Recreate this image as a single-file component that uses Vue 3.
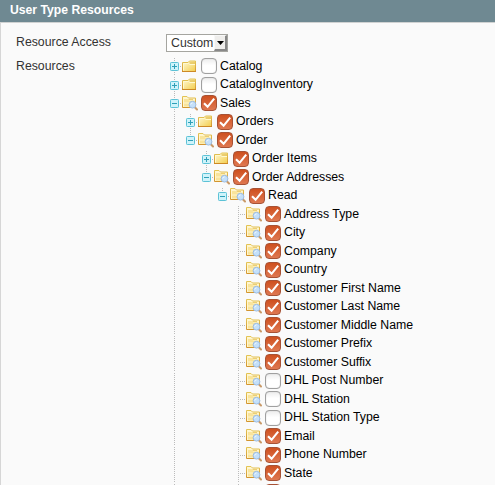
<script setup>
import { ref } from 'vue'

const names = [
  ['Catalog', 0, 'plus', false],
  ['CatalogInventory', 0, 'plus', false],
  ['Sales', 0, 'minus', true],
  ['Orders', 1, 'plus', true],
  ['Order', 1, 'minus', true],
  ['Order Items', 2, 'plus', true],
  ['Order Addresses', 2, 'minus', true],
  ['Read', 3, 'minus', true],
  ['Address Type', 4, 'leaf', true],
  ['City', 4, 'leaf', true],
  ['Company', 4, 'leaf', true],
  ['Country', 4, 'leaf', true],
  ['Customer First Name', 4, 'leaf', true],
  ['Customer Last Name', 4, 'leaf', true],
  ['Customer Middle Name', 4, 'leaf', true],
  ['Customer Prefix', 4, 'leaf', true],
  ['Customer Suffix', 4, 'leaf', true],
  ['DHL Post Number', 4, 'leaf', false],
  ['DHL Station', 4, 'leaf', false],
  ['DHL Station Type', 4, 'leaf', false],
  ['Email', 4, 'leaf', true],
  ['Phone Number', 4, 'leaf', true],
  ['State', 4, 'leaf', true],
  ['', 4, 'leaf', true],
]
const nodes = ref(names.map(([label, depth, kind, checked]) => ({ label, depth, kind, checked })))

const hasLine = (index, level) => {
  if (level === 0 || index === names.length - 1) return level === 0 || level === 4
  for (let i = index + 1; i < names.length; i++) {
    if (names[i][1] < level) return false
    if (names[i][1] === level) return true
  }
  return false
}
</script>

<template>
  <section class="panel">
    <svg class="defs" width="0" height="0">
      <defs>
        <linearGradient id="gold" x1="0" y1="0" x2="1" y2="1">
          <stop offset="0" stop-color="#fffbd9" />
          <stop offset="1" stop-color="#f3cd4c" />
        </linearGradient>
        <linearGradient id="edge" x1="0" y1="0" x2="0" y2="1">
          <stop offset="0" stop-color="#e3c455" />
          <stop offset="1" stop-color="#d3952f" />
        </linearGradient>
      </defs>
    </svg>
    <h1 class="head">User Type Resources</h1>
    <div class="body">
      <div class="field">
        <span class="label">Resource Access</span>
        <div class="select">
          <span class="value">Custom</span>
          <span class="arrow"><svg width="7" height="4" viewBox="0 0 7 4"><path d="M0 0h7L3.5 4z" /></svg></span>
        </div>
      </div>
      <div class="field">
        <span class="label second">Resources</span>
        <ul class="tree">
          <li v-for="(n, i) in nodes" :key="i" class="row">
            <span v-for="l in n.depth" :key="l" class="guide" :class="{ line: hasLine(i, l - 1) }"></span>
            <span class="guide elbow" :class="[n.kind, { line: hasLine(i, n.depth), end: !hasLine(i, n.depth) }]">
              <svg v-if="n.kind !== 'leaf'" class="toggle" width="9" height="9" viewBox="0 0 9 9">
                <rect x=".5" y=".5" width="8" height="8" rx=".8" fill="#cff3fa" stroke="#5cc2d6" />
                <path d="M2 4.5h5" stroke="#2f9fb8" />
                <path v-if="n.kind === 'plus'" d="M4.5 2v5" stroke="#2f9fb8" />
              </svg>
            </span>
            <svg class="folder" width="16" height="16" viewBox="0 0 16 16">
              <template v-if="n.kind === 'plus'">
                <path d="M.5 13.500v-9H6l1.500-1.500h6v10.500z" fill="url(#gold)" stroke="url(#edge)" />
                <path d="M7.500 5h5.500" stroke="#dcb544" />
                <path d="M1.500 12.500V5.500h5l1.500 1h5" fill="none" stroke="#fff9cf" />
                <path d="M0 13.500h14" stroke="#cd8925" />
              </template>
              <template v-else>
                <path d="M.5 12.500v-11H5l1.500 1.500h7v9.500z" fill="#fff6cf" stroke="url(#edge)" />
                <path d="M2 4h3.500L7 5.500h5.500V7.500H2zM2 8.500h10V11.500H2z" fill="#f9e49b" />
                <path d="M6.500 4.500H11" stroke="#eccf74" />
                <path d="M12.800 12.300l2.200 2.200" stroke="#c99a68" stroke-width="2" stroke-linecap="round" />
                <circle cx="10.500" cy="9.700" r="3.400" fill="#c4e0fa" stroke="#9dbce0" />
                <path d="M8.700 9.500q.3-1.500 1.800-1.600" fill="none" stroke="#f4fbff" />
              </template>
            </svg>
            <span class="check" :class="{ on: n.checked }" @click="n.checked = !n.checked">
              <svg v-if="n.checked" width="14" height="14" viewBox="0 0 14 14">
                <path d="M2 7.200l3.600 3.600L12.200 2.600" fill="none" stroke="#fff" stroke-width="2.100" />
              </svg>
            </span>
            <span class="name">{{ n.label }}</span>
          </li>
        </ul>
      </div>
    </div>
  </section>
</template>

<style>
body { margin: 0; overflow: hidden; background: #fafafa; }
</style>

<style scoped>
.panel {
  box-sizing: border-box;
  height: 485px;
  overflow: hidden;
  font: 12.300px "Liberation Sans", Arial, sans-serif;
  color: #333;
}
.defs { display: block; }
.head {
  box-sizing: border-box;
  height: 22px;
  margin: 0;
  padding-left: 10px;
  background: #6f8992;
  color: #fff;
  font-size: 12.200px;
  line-height: 21px;
  font-weight: bold;
}
.body {
  box-sizing: border-box;
  height: 463px;
  padding: 11px 0 0 15px;
  border-top: 1px solid #d0d2d2;
  border-left: 1px solid #d6d6d6;
  background: #fafafa;
}
.field { display: flex; align-items: flex-start; }
.label { width: 150px; line-height: 16px; }
.second { padding-top: 1px; }
.select {
  box-sizing: border-box;
  display: flex;
  width: 62px;
  height: 18px;
  margin-bottom: 5px;
  border: 1px solid #a5a5a0;
  background: #fff;
}
.value { width: 47px; padding-left: 4px; box-sizing: border-box; line-height: 17px; }
.arrow {
  display: flex;
  box-sizing: border-box;
  width: 13px;
  height: 16px;
  align-items: center;
  justify-content: center;
  background: #efeeec;
  border: solid;
  border-width: 1px 2px 2px 1px;
  border-color: #f8f8f8 #888 #888 #f8f8f8;
}
.arrow svg { flex: none; }
.tree { margin: 0; padding: 0; list-style: none; color: #000; }
.row { display: flex; height: 18px; align-items: flex-start; white-space: nowrap; }
.row:nth-child(odd) { height: 19px; }
.guide { flex: none; width: 16px; height: 100%; }
.guide.line, .guide.end {
  background: repeating-linear-gradient(to bottom, transparent 0 1px, #bbb 1px 2px) 8px 0 / 1px 100% no-repeat;
}
.guide.end { background-size: 1px 9px; }
.elbow::after {
  content: "";
  display: block;
  width: 7px;
  height: 1px;
  margin: 9px 0 0 9px;
  background: repeating-linear-gradient(to right, transparent 0 1px, #bbb 1px 2px);
}
.toggle { display: block; margin: 5px 0 -14px 4px; }
.folder { flex: none; margin-top: 1px; }
.check {
  flex: none;
  box-sizing: border-box;
  width: 16px;
  height: 16px;
  margin: 1px 3px 0;
  border: 1px solid #a0a0a0;
  border-radius: 4px;
  background: linear-gradient(#ededed, #fff 45%);
  box-shadow: inset 0 0 1px #aaa;
}
.check.on {
  border-color: #a75235;
  background: linear-gradient(#ce501f, #df7851);
  box-shadow: none;
}
.check svg { display: block; }
.name { line-height: 18px; }
.row:nth-child(even) .folder { margin-top: 0; }
.row:nth-child(even) .name { line-height: 16px; }
.row:last-child .folder { margin-top: 1px; }
</style>
